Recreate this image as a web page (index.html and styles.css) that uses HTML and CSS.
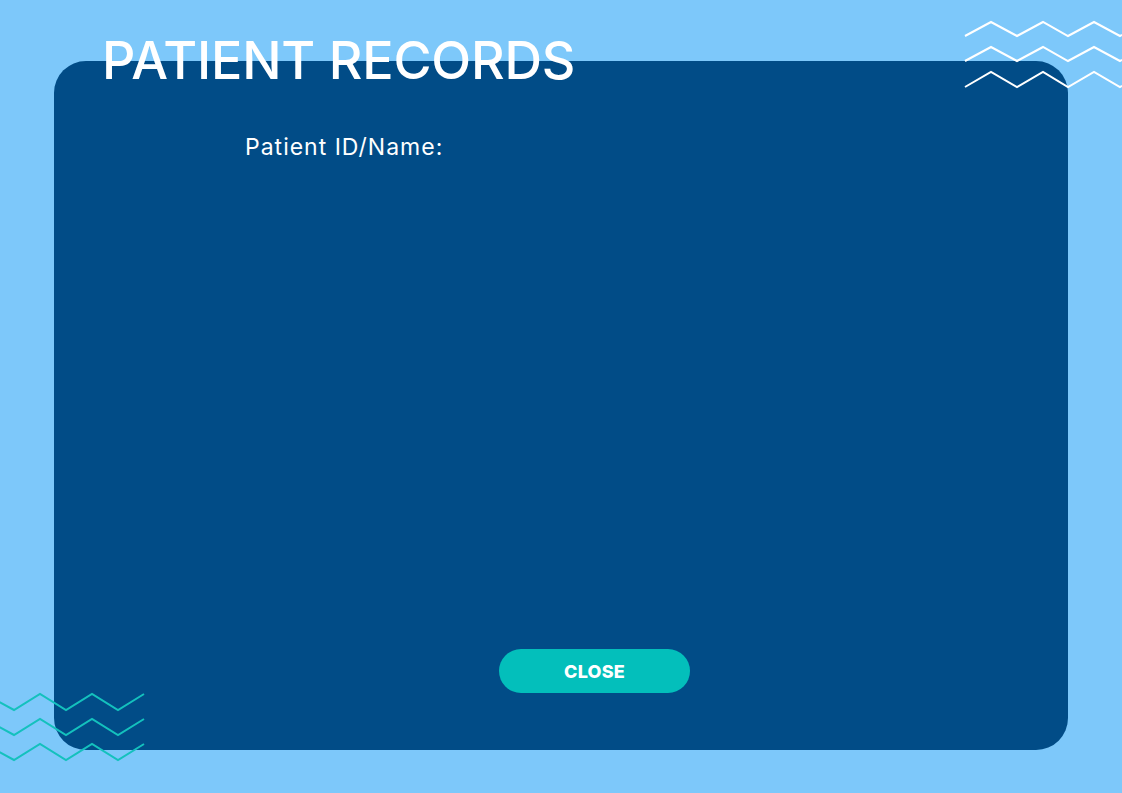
FILE: index.html
```html
<!DOCTYPE html>
<html lang="en">
<head>
<meta charset="utf-8">
<title>Patient Records</title>
<link rel="stylesheet" href="styles.css">
</head>
<body>
<div class="page">
  <main class="panel">
    <p class="field-label">Patient ID/Name:</p>
    <button class="close-btn" type="button">CLOSE</button>
  </main>
  <h1 class="title">PATIENT RECORDS</h1>
  <svg class="zigzag zigzag-top" width="160" height="80" viewBox="0 0 160 80" aria-hidden="true">
    <g fill="none" stroke="#ffffff" stroke-width="2" stroke-linejoin="miter">
      <polyline points="0,26 26,12 52,26 78,12 103,26 129,12 155,26 165,21"/>
      <polyline points="0,51 26,37 52,51 78,37 103,51 129,37 155,51 165,46"/>
      <polyline points="0,77 26,62 52,77 78,62 103,77 129,62 155,77 165,72"/>
    </g>
  </svg>
  <svg class="zigzag zigzag-bottom" width="150" height="80" viewBox="0 0 150 80" aria-hidden="true">
    <g fill="none" stroke="#14c1bd" stroke-width="2">
      <polyline points="-12,7 14,21 40,5 66,21 92,5 118,21 144,5"/>
      <polyline points="-12,32 14,46 40,30 66,46 92,30 118,46 144,30"/>
      <polyline points="-12,57 14,71 40,55 66,71 92,55 118,71 144,55"/>
    </g>
  </svg>
</div>
</body>
</html>
```

FILE: styles.css
```css
* { box-sizing: border-box; }

html, body {
  margin: 0;
  padding: 0;
}

body {
  background: #7dc8fa;
  font-family: "Inter", "Noto Sans", "Liberation Sans", sans-serif;
  width: 1122px;
  height: 793px;
  overflow: hidden;
}

.page {
  position: relative;
  width: 1122px;
  height: 793px;
  padding: 61px 54px 43px 54px;
}

.panel {
  height: 100%;
  background: #014c87;
  border-radius: 32px;
  display: flex;
  flex-direction: column;
  align-items: flex-start;
  padding: 70px 0 57px 191px;
}

.field-label {
  margin: 0;
  color: #ffffff;
  font-size: 23px;
  font-weight: 400;
  line-height: 32px;
  letter-spacing: 1px;
}

.close-btn {
  margin-top: auto;
  margin-left: 254px;
  width: 191px;
  height: 44px;
  border: none;
  border-radius: 22px;
  background: #03bfbb;
  color: #ffffff;
  font-family: "Inter", "Noto Sans", sans-serif;
  font-weight: 800;
  font-size: 18px;
  letter-spacing: 0.2px;
  padding: 0;
}

.title {
  position: absolute;
  left: 102px;
  top: 26px;
  margin: 0;
  color: #ffffff;
  font-size: 52px;
  font-weight: 500;
  line-height: 70px;
  letter-spacing: -0.2px;
}

.zigzag {
  position: absolute;
  overflow: visible;
}

.zigzag-top {
  left: 965px;
  top: 10px;
}

.zigzag-bottom {
  left: 0;
  top: 689px;
}
```
